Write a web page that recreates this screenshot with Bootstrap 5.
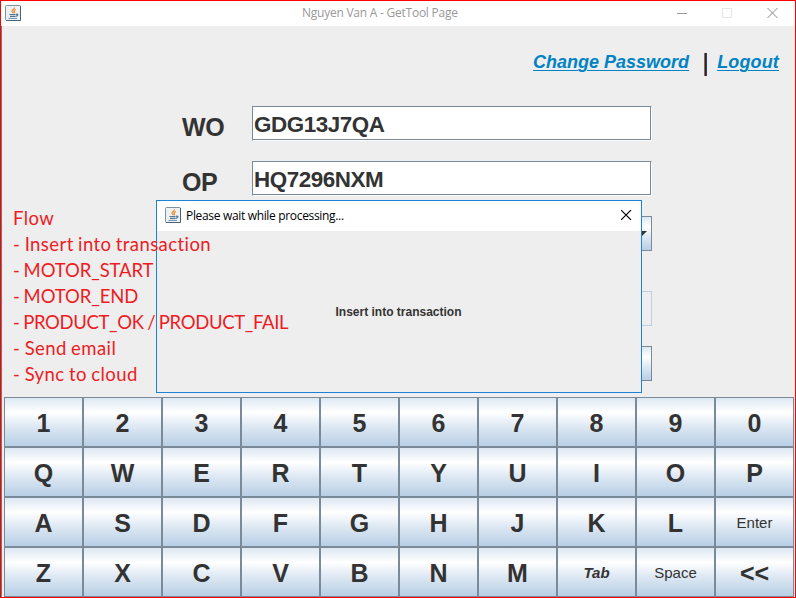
<!DOCTYPE html>
<html lang="en">
<head>
<meta charset="utf-8">
<meta name="viewport" content="width=device-width, initial-scale=1">
<title>Nguyen Van A - GetTool Page</title>
<link href="https://cdn.jsdelivr.net/npm/bootstrap@5.3.0/dist/css/bootstrap.min.css" rel="stylesheet">
<style>
:root{--edge:#7a8a99;--ink:#333;--panel:#eee;--steel:linear-gradient(#dde8f3 0,#fff 30%,#dde8f3 60%,#b8cfe5 100%)}
body{margin:0;background:var(--panel);font-family:"Liberation Sans",Arial,sans-serif;color:var(--ink);overflow:hidden}
.app-window{width:796px;height:598px;border:1px solid #f00;background:var(--panel)}
.title-bar{height:25px;padding-bottom:1px;background:#fff;font-family:"Open Sans","Noto Sans",sans-serif;font-size:12px;line-height:24px}
.app-title{color:#999;padding-left:281px;white-space:nowrap;letter-spacing:-.24px}
.java-icon{width:16px;height:16px;flex:none;display:block}
.caption-buttons{padding-right:17px;gap:35px}
.caption-buttons svg{display:block}
.app-content{height:571px;border-left:1px solid #777}
.top-links{height:80px;padding:23px 16px 0 0;font-size:18px;font-weight:bold;font-style:italic;line-height:27px}
.top-links a{color:#0082c3;text-decoration:underline;text-decoration-thickness:1px;text-underline-offset:2px}
.top-links a:last-child{letter-spacing:.15px}
.link-rule{width:3px;height:23px;margin:4px 10px 0 15px;background:linear-gradient(90deg,#a06438 1px,#222838 1px 2px,#204080 2px)}
.tool-form{height:291px;padding-left:180px}
.form-line{height:35px;margin-bottom:20px}
.form-line.pick-line{margin-bottom:40px}
.form-line .tag{width:70px;font-size:25px;letter-spacing:-.4px;font-weight:bold;line-height:35px;padding-top:4px}
.entry{width:400px;height:35px;background:#fff;border:1px solid var(--edge);border-right-color:#fff;border-bottom-color:#fff;box-shadow:inset -1px -1px var(--edge);padding:0 1px;font-size:22.4px;letter-spacing:-.45px;font-weight:bold;line-height:35px;color:var(--ink)}
.steel-box{width:400px;height:35px;background:var(--steel);border:1px solid var(--edge)}
.steel-box.off{background:var(--panel);border-color:#b8cfe5}
.keyboard{display:grid;grid-template-columns:repeat(10,79px);grid-template-rows:repeat(4,50px);margin-left:2px}
.keyboard .btn{border:1px solid var(--edge);border-radius:0;padding:1px 0 0;background:var(--steel);color:var(--ink);font-size:25px;font-weight:bold;line-height:48px}
.keyboard .btn.plain{font-size:15px;font-weight:normal}
.keyboard .btn.slant{font-size:15px;font-style:italic}
.wait-dialog{position:absolute;left:156px;top:200px;width:486px;height:193px;border:1px solid #1883d7;background:var(--panel)}
.dialog-bar{height:30px;background:#fff;padding:0 9px 2px 8px;font-family:"Open Sans","Noto Sans",sans-serif;font-size:12px;color:#000}
.dialog-title{margin-left:5px;padding-top:2px;letter-spacing:-.33px;white-space:nowrap}
.dialog-body{height:161px;font-size:12px;font-weight:bold;padding-right:1px}
.flow-note{position:absolute;left:13px;top:205px;color:#ed1c24;font-family:Lato,"Open Sans",sans-serif;font-size:18.5px;line-height:26px;white-space:nowrap;letter-spacing:.42px;word-spacing:-.8px}
.flow-note .caps{letter-spacing:-.1px}
.flow-note .caps-long{letter-spacing:-.34px}
</style>
<script src="https://cdn.jsdelivr.net/npm/bootstrap@5.3.0/dist/js/bootstrap.bundle.min.js"></script>
</head>
<body>
<main class="app-window position-relative">
  <header class="title-bar d-flex align-items-center">
    <svg class="java-icon ms-1" viewBox="0 0 16 16"><rect x=".5" y=".5" width="15" height="15" rx="1" fill="#edf1f4" stroke="#7d929f"/><path d="M1 15.5h14.5V1" fill="none" stroke="#456478"/><path d="M9.500 2.500C10 4 6.500 4.500 7 6.500L8.200 8M10.800 4.500C8.500 5.500 8.500 6.300 9.500 7L8.800 8.500" fill="none" stroke="#ef8722" stroke-width="1.200"/><path d="M4.500 9.500h6M5 11.300h5.300M11 9.300c2.800-.8 2.300 1.900-.4 2" fill="none" stroke="#4c7596" stroke-width="1.200"/><path d="M3.500 13.400h8.500" stroke="#6d8fab"/></svg>
    <span class="app-title">Nguyen Van A - GetTool Page</span>
    <div class="caption-buttons d-flex align-items-center ms-auto">
      <svg width="10" height="10"><path d="M0 5.500h10" stroke="#999"/></svg>
      <svg width="10" height="10"><rect x=".5" y=".5" width="9" height="9" fill="none" stroke="#e6e6e6"/></svg>
      <svg width="11" height="10"><path d="M.5 0l10 10M10.500 0l-10 10" stroke="#888"/></svg>
    </div>
  </header>
  <section class="app-content">
    <nav class="top-links d-flex justify-content-end">
      <a href="#">Change Password</a><span class="link-rule"></span><a href="#">Logout</a>
    </nav>
    <form class="tool-form">
      <div class="form-line d-flex"><label class="tag">WO</label><div class="entry">GDG13J7QA</div></div>
      <div class="form-line d-flex"><label class="tag">OP</label><div class="entry">HQ7296NXM</div></div>
      <div class="form-line pick-line d-flex"><span class="tag"></span><div class="steel-box d-flex align-items-center justify-content-end"><svg width="10" height="5" class="me-1"><path d="M0 0h10L5 5z" fill="#333"/></svg></div></div>
      <div class="form-line d-flex"><span class="tag"></span><div class="steel-box off"></div></div>
      <div class="form-line d-flex mb-0"><span class="tag"></span><div class="steel-box"></div></div>
    </form>
    <div class="keyboard">
      <button class="btn">1</button><button class="btn">2</button><button class="btn">3</button><button class="btn">4</button><button class="btn">5</button><button class="btn">6</button><button class="btn">7</button><button class="btn">8</button><button class="btn">9</button><button class="btn">0</button>
      <button class="btn">Q</button><button class="btn">W</button><button class="btn">E</button><button class="btn">R</button><button class="btn">T</button><button class="btn">Y</button><button class="btn">U</button><button class="btn">I</button><button class="btn">O</button><button class="btn">P</button>
      <button class="btn">A</button><button class="btn">S</button><button class="btn">D</button><button class="btn">F</button><button class="btn">G</button><button class="btn">H</button><button class="btn">J</button><button class="btn">K</button><button class="btn">L</button><button class="btn plain">Enter</button>
      <button class="btn">Z</button><button class="btn">X</button><button class="btn">C</button><button class="btn">V</button><button class="btn">B</button><button class="btn">N</button><button class="btn">M</button><button class="btn slant">Tab</button><button class="btn plain">Space</button><button class="btn">&lt;&lt;</button>
    </div>
  </section>
</main>
<section class="wait-dialog" role="dialog">
  <header class="dialog-bar d-flex align-items-center">
    <svg class="java-icon" viewBox="0 0 16 16"><rect x=".5" y=".5" width="15" height="15" rx="1" fill="#edf1f4" stroke="#7d929f"/><path d="M1 15.500h14.500V1" fill="none" stroke="#456478"/><path d="M9.500 2.500C10 4 6.500 4.500 7 6.500L8.200 8M10.800 4.500C8.500 5.500 8.500 6.300 9.500 7L8.800 8.500" fill="none" stroke="#ef8722" stroke-width="1.200"/><path d="M4.500 9.500h6M5 11.300h5.300M11 9.300c2.800-.8 2.300 1.900-.4 2" fill="none" stroke="#4c7596" stroke-width="1.200"/><path d="M3.500 13.400h8.500" stroke="#6d8fab"/></svg>
    <span class="dialog-title">Please wait while processing...</span>
    <svg class="ms-auto" width="11" height="10"><path d="M0 0l10 10M10 0l-10 10" stroke="#000" stroke-width="1.100"/></svg>
  </header>
  <div class="dialog-body d-flex align-items-center justify-content-center">Insert into transaction</div>
</section>
<div class="flow-note">
  <div>Flow</div><div>- Insert into transaction</div><div class="caps">- MOTOR_START</div><div class="caps">- MOTOR_END</div><div class="caps-long">- PRODUCT_OK / PRODUCT_FAIL</div><div>- Send email</div><div>- Sync to cloud</div>
</div>
</body>
</html>
